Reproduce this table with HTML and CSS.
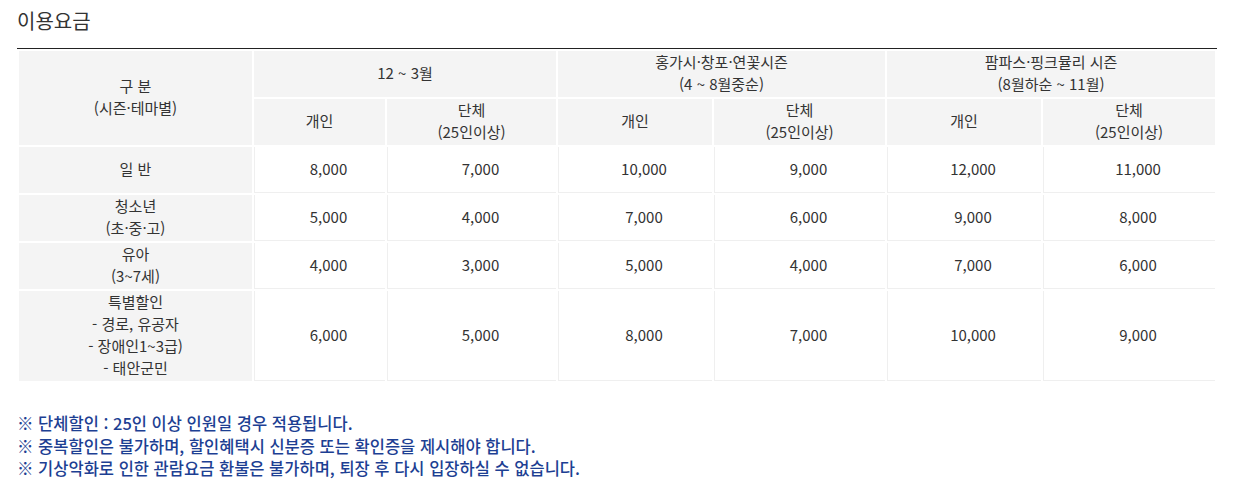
FILE: index.html
```html
<!DOCTYPE html>
<html lang="ko">
<head>
<meta charset="utf-8">
<title>이용요금</title>
<link rel="stylesheet" href="styles.css">
</head>
<body>
<div class="wrap">
  <h2 class="title">이용요금</h2>
  <table class="fee">
    <colgroup>
      <col class="c1"><col class="c2"><col class="c3"><col class="c4"><col class="c5"><col class="c6"><col class="c7">
    </colgroup>
    <thead>
      <tr>
        <th rowspan="2">구 분<br>(시즌·테마별)</th>
        <th colspan="2">12 ~ 3월</th>
        <th colspan="2">홍가시·창포·연꽃시즌<br>(4 ~ 8월중순)</th>
        <th colspan="2">팜파스·핑크뮬리 시즌<br>(8월하순 ~ 11월)</th>
      </tr>
      <tr>
        <th>개인</th><th>단체<br>(25인이상)</th>
        <th>개인</th><th>단체<br>(25인이상)</th>
        <th>개인</th><th>단체<br>(25인이상)</th>
      </tr>
    </thead>
    <tbody>
      <tr>
        <th>일 반</th>
        <td>8,000</td><td>7,000</td><td>10,000</td><td>9,000</td><td>12,000</td><td>11,000</td>
      </tr>
      <tr>
        <th>청소년<br>(초·중·고)</th>
        <td>5,000</td><td>4,000</td><td>7,000</td><td>6,000</td><td>9,000</td><td>8,000</td>
      </tr>
      <tr>
        <th>유아<br>(3~7세)</th>
        <td>4,000</td><td>3,000</td><td>5,000</td><td>4,000</td><td>7,000</td><td>6,000</td>
      </tr>
      <tr>
        <th>특별할인<br>- 경로, 유공자<br>- 장애인1~3급)<br>- 태안군민</th>
        <td>6,000</td><td>5,000</td><td>8,000</td><td>7,000</td><td>10,000</td><td>9,000</td>
      </tr>
    </tbody>
  </table>
  <ul class="notes">
    <li>※ 단체할인 : 25인 이상 인원일 경우 적용됩니다.</li>
    <li>※ 중복할인은 불가하며, 할인혜택시 신분증 또는 확인증을 제시해야 합니다.</li>
    <li>※ 기상악화로 인한 관람요금 환불은 불가하며, 퇴장 후 다시 입장하실 수 없습니다.</li>
  </ul>
</div>
</body>
</html>
```
FILE: styles.css
```css
html, body {
  margin: 0;
  padding: 0;
  background: #fff;
}
body {
  font-family: "Noto Sans CJK KR", "Noto Sans", sans-serif;
  color: #333;
}
.wrap {
  padding: 0 17px;
}
.title {
  margin: 0;
  padding-top: 7px;
  font-size: 20px;
  line-height: 28px;
  font-weight: 400;
  color: #333;
  margin-bottom: 13px;
}
.fee {
  width: 1200px;
  table-layout: fixed;
  border-collapse: separate;
  border-spacing: 2px;
  border-top: 1px solid #222;
  font-size: 15px;
  line-height: 22px;
  color: #333;
}
.c1 { width: 233px; }
.c2 { width: 131px; }
.c3 { width: 169px; }
.c4 { width: 154px; }
.c5 { width: 171px; }
.c6 { width: 154px; }
.c7 { width: 172px; }
.fee th,
.fee td {
  box-sizing: border-box;
  height: 46px;
  padding: 0 4px 2px;
  text-align: center;
  vertical-align: middle;
  font-weight: 400;
}
.fee th {
  background: #f4f4f4;
}
.fee thead tr:last-child th {
  height: 45px;
}
.fee td {
  padding: 0 0 2px 17px;
  background: #fff;
  border-left: 1px solid #efefef;
  border-bottom: 1px solid #efefef;
}
.notes {
  list-style: none;
  margin: 29px 0 0;
  padding: 0;
  font-size: 16.5px;
  line-height: 22.5px;
  font-weight: 500;
  color: #1d3f93;
}
```
